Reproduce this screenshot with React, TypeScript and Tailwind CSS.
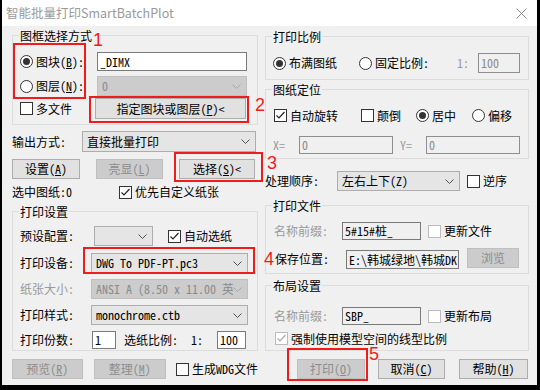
import React from 'react';

type Tone = 'white' | 'readonly' | 'disabled';

const Chevron = ({ disabled }: { disabled?: boolean }) => (
  <svg width="9" height="5" viewBox="0 0 9 5" className="shrink-0">
    <path d="M0.5 0.5 L4.5 4.5 L8.5 0.5" fill="none" stroke={disabled ? '#a9a9a9' : '#505050'} strokeWidth="1" />
  </svg>
);

function Combo({ value, className = '', disabled }: { value: string; className?: string; disabled?: boolean }) {
  return (
    <div
      className={`flex items-center border pl-[4px] pr-[5px] ${
        disabled ? 'border-[#bfbfbf] bg-[#cccccc] text-[#8a8a8a]' : 'border-[#adadad] bg-[#e5e5e5] text-black'
      } ${className}`}
    >
      <span className="min-w-0 flex-1 overflow-hidden whitespace-nowrap">{value}</span>
      <Chevron disabled={disabled} />
    </div>
  );
}

function Field({ value, className = '', tone = 'white' }: { value: string; className?: string; tone?: Tone }) {
  const look =
    tone === 'white'
      ? 'border-[#7a7a7a] bg-white text-black'
      : tone === 'readonly'
        ? 'border-[#7a7a7a] bg-[#f0f0f0] text-black'
        : 'border-[#8e8e8e] bg-[#f0f0f0] text-[#8a8a8a]';
  return <div className={`flex items-center overflow-hidden whitespace-nowrap border pl-[2px] ${look} ${className}`}>{value}</div>;
}

function Btn({ children, className = '', disabled }: { children: React.ReactNode; className?: string; disabled?: boolean }) {
  return (
    <button
      type="button"
      className={`flex h-[20px] items-center justify-center border ${
        disabled ? 'border-[#bfbfbf] bg-[#cccccc] text-[#8d8d8d]' : 'border-[#adadad] bg-[#e1e1e1] text-black'
      } ${className}`}
    >
      {children}
    </button>
  );
}

function Check({ label, checked, disabled, className = '' }: { label: React.ReactNode; checked?: boolean; disabled?: boolean; className?: string }) {
  return (
    <div className={`flex shrink-0 items-center gap-[3px] ${className}`}>
      <span className={`relative h-[13px] w-[13px] shrink-0 border bg-white ${disabled ? 'border-[#bcbcbc]' : 'border-[#333333]'}`}>
        {checked && (
          <svg width="11" height="11" viewBox="0 0 11 11" className="absolute left-0 top-0">
            <path d="M1.5 5.5 L4 8 L9.5 2" fill="none" stroke={disabled ? '#a8a8a8' : '#222'} strokeWidth="1.2" />
          </svg>
        )}
      </span>
      <span className="whitespace-nowrap">{label}</span>
    </div>
  );
}

function Radio({ label, checked, className = '' }: { label: React.ReactNode; checked?: boolean; className?: string }) {
  return (
    <div className={`flex shrink-0 items-center gap-[3px] ${className}`}>
      <span className="flex h-[13px] w-[13px] shrink-0 items-center justify-center rounded-full border border-[#333333] bg-white">
        {checked && <span className="h-[7px] w-[7px] rounded-full bg-[#333333]" />}
      </span>
      <span className="whitespace-nowrap">{label}</span>
    </div>
  );
}

function Group({ title, className = '', children }: { title: string; className?: string; children: React.ReactNode }) {
  return (
    <div className={`border border-[#dcdcdc] ${className}`}>
      <div className="-mt-[8px] ml-[6px] w-fit bg-[#f0f0f0] px-[1px] leading-[16px]">{title}</div>
      {children}
    </div>
  );
}

const Mark = ({ className }: { className: string }) => (
  <div className={`pointer-events-none absolute border-2 border-[#f01c1c] ${className}`} />
);

const Num = ({ n, className }: { n: string; className: string }) => (
  <div className={`pointer-events-none absolute font-['Liberation_Sans',sans-serif] text-[18px] leading-none text-[#f01c1c] ${className}`}>{n}</div>
);

export default function App() {
  return (
    <div className="relative h-[390px] w-[540px] overflow-hidden bg-black font-['Noto_Sans_Mono_CJK_SC','Noto_Sans_CJK_SC',monospace] text-[12px] leading-[16px] text-black">
      <div className="ml-[2px] h-[385px] w-[535px] bg-[#f0f0f0]">
        {/* title bar */}
        <div className="flex h-[26px] items-center justify-between bg-white pl-[4px] pr-[10px]">
          <span className="font-['Noto_Sans_CJK_SC',sans-serif] text-[12.5px] text-[#9a9a9a]">智能批量打印SmartBatchPlot</span>
          <svg width="11" height="11" viewBox="0 0 11 11">
            <path d="M0.5 0.5 L10.5 10.5 M10.5 0.5 L0.5 10.5" stroke="#8a8a8a" strokeWidth="1" />
          </svg>
        </div>

        <div className="flex gap-[7px] pl-[10px] pt-[9px]">
          {/* left column */}
          <div className="flex w-[246px] flex-col">
            <Group title="图框选择方式" className="h-[90px]">
              <div className="mt-[8px] flex h-[19px] items-center pl-[7px]">
                <Radio checked label={<>图块(<u>B</u>):</>} className="w-[77px]" />
                <Field value="_DIMX" className="h-[19px] w-[150px]" />
              </div>
              <div className="mt-[5px] flex h-[20px] items-center pl-[7px]">
                <Radio label={<>图层(<u>N</u>):</>} className="w-[77px]" />
                <Combo value="0" disabled className="h-[20px] w-[150px]" />
              </div>
              <div className="mt-[2px] flex h-[21px] items-center pl-[7px]">
                <Check label="多文件" className="w-[75px]" />
                <Btn className="h-[21px] w-[151px]">指定图块或图层(<u>P</u>)&lt;</Btn>
              </div>
            </Group>

            <div className="mt-[6px] flex h-[21px] items-center">
              <span className="w-[70px]">输出方式:</span>
              <Combo value="直接批量打印" className="h-[21px] w-[174px]" />
            </div>

            <div className="mt-[7px] flex h-[20px] items-center">
              <Btn className="w-[68px]">设置(<u>A</u>)</Btn>
              <Btn disabled className="ml-[16px] w-[67px]">亮显(<u>L</u>)</Btn>
              <Btn className="ml-[16px] w-[76px]">选择(<u>S</u>)&lt;</Btn>
            </div>

            <div className="mt-[6px] flex h-[14px] items-center">
              <span className="w-[107px]">选中图纸:0</span>
              <Check checked label="优先自定义纸张" />
            </div>

            <Group title="打印设置" className="mt-[12px] h-[140px]">
              <div className="mt-[6px] flex h-[20px] items-center pl-[7px]">
                <span className="w-[74px]">预设配置:</span>
                <Combo value="" className="h-[20px] w-[59px]" />
                <Check checked label="自动选纸" className="ml-[15px]" />
              </div>
              <div className="mt-[7px] flex h-[20px] items-center pl-[7px]">
                <span className="w-[71px]">打印设备:</span>
                <Combo value="DWG To PDF-PT.pc3" className="h-[20px] w-[157px]" />
              </div>
              <div className="mt-[6px] flex h-[20px] items-center pl-[7px]">
                <span className="w-[71px] text-[#9a9a9a]">纸张大小:</span>
                <Combo value="ANSI A (8.50 x 11.00 英" disabled className="h-[20px] w-[157px]" />
              </div>
              <div className="mt-[6px] flex h-[20px] items-center pl-[7px]">
                <span className="w-[71px]">打印样式:</span>
                <Combo value="monochrome.ctb" className="h-[20px] w-[157px]" />
              </div>
              <div className="mt-[6px] flex h-[18px] items-center pl-[7px]">
                <span className="w-[72px]">打印份数:</span>
                <Field value="1" className="h-[18px] w-[24px]" />
                <span className="ml-[8px] w-[67px]">选纸比例:</span>
                <span className="w-[26px]">1:</span>
                <Field value="100" className="h-[18px] w-[29px]" />
              </div>
            </Group>

            <div className="mt-[8px] flex h-[20px] items-center">
              <Btn disabled className="w-[71px]">预览(<u>R</u>)</Btn>
              <Btn disabled className="ml-[11px] w-[73px]">整理(<u>M</u>)</Btn>
              <Check label="生成WDG文件" className="ml-[10px]" />
            </div>
          </div>

          {/* right column */}
          <div className="flex w-[264px] flex-col pt-[1px]">
            <Group title="打印比例" className="h-[44px]">
              <div className="mt-[8px] flex h-[20px] items-center pl-[7px]">
                <Radio checked label="布满图纸" className="w-[86px]" />
                <Radio label="固定比例:" className="w-[98px]" />
                <span className="w-[21px] text-[#9a9a9a]">1:</span>
                <Field value="100" tone="disabled" className="h-[20px] w-[42px]" />
              </div>
            </Group>

            <Group title="图纸定位" className="mt-[9px] h-[70px]">
              <div className="mt-[8px] flex h-[19px] items-center pl-[8px]">
                <Check checked label="自动旋转" className="w-[87px]" />
                <Check label="颠倒" className="w-[55px]" />
                <Radio checked label="居中" className="w-[56px]" />
                <Radio label="偏移" />
              </div>
              <div className="mt-[11px] flex h-[18px] items-center pl-[7px] text-[#9a9a9a]">
                <span className="w-[26px]">X=</span>
                <Field value="0" tone="disabled" className="h-[18px] w-[94px]" />
                <span className="ml-[7px] w-[26px]">Y=</span>
                <Field value="0" tone="disabled" className="h-[18px] w-[94px]" />
              </div>
            </Group>

            <div className="mt-[12px] flex h-[20px] items-center">
              <span className="w-[72px]">处理顺序:</span>
              <Combo value="左右上下(Z)" className="h-[20px] w-[123px]" />
              <Check label="逆序" className="ml-[7px]" />
            </div>

            <Group title="打印文件" className="mt-[14px] h-[69px]">
              <div className="mt-[8px] flex h-[18px] items-center pl-[8px]">
                <span className="w-[68px] text-[#9a9a9a]">名称前缀:</span>
                <Field value="5#15#桩_" tone="readonly" className="h-[18px] w-[79px]" />
                <Check disabled label="更新文件" className="ml-[7px]" />
              </div>
              <div className="mt-[8px] flex h-[21px] items-start pl-[9px]">
                <span className="w-[71px] self-center">保存位置:</span>
                <Field value="E:\韩城绿地\韩城DK" tone="readonly" className="mt-[2px] h-[19px] w-[113px]" />
                <Btn disabled className="ml-[8px] w-[52px]">浏览</Btn>
              </div>
            </Group>

            <Group title="布局设置" className="mt-[11px] h-[66px]">
              <div className="mt-[13px] flex h-[18px] items-center pl-[8px]">
                <span className="w-[68px] text-[#9a9a9a]">名称前缀:</span>
                <Field value="SBP_" tone="readonly" className="h-[18px] w-[79px]" />
                <Check disabled label="更新布局" className="ml-[7px]" />
              </div>
              <div className="mt-[7px] flex h-[13px] items-center pl-[9px]">
                <Check checked disabled label="强制使用模型空间的线型比例" />
              </div>
            </Group>

            <div className="mt-[8px] flex h-[20px] items-center">
              <Btn disabled className="ml-[32px] w-[68px]">打印(<u>O</u>)</Btn>
              <Btn className="ml-[13px] w-[67px]">取消(<u>C</u>)</Btn>
              <Btn className="ml-[14px] w-[69px]">帮助(<u>H</u>)</Btn>
            </div>
          </div>
        </div>
      </div>

      {/* red annotations */}
      <Mark className="left-[13px] top-[43px] h-[56px] w-[73px]" />
      <Num n="1" className="left-[93px] top-[31px]" />
      <Mark className="left-[89px] top-[96px] h-[27px] w-[160px]" />
      <Num n="2" className="left-[255px] top-[96px]" />
      <Mark className="left-[174px] top-[152px] h-[30px] w-[89px]" />
      <Num n="3" className="left-[267px] top-[154px]" />
      <Mark className="left-[83px] top-[247px] h-[27px] w-[172px]" />
      <Num n="4" className="left-[264px] top-[250px]" />
      <Mark className="left-[287px] top-[348px] h-[33px] w-[81px]" />
      <Num n="5" className="left-[369px] top-[345px]" />
    </div>
  );
}
